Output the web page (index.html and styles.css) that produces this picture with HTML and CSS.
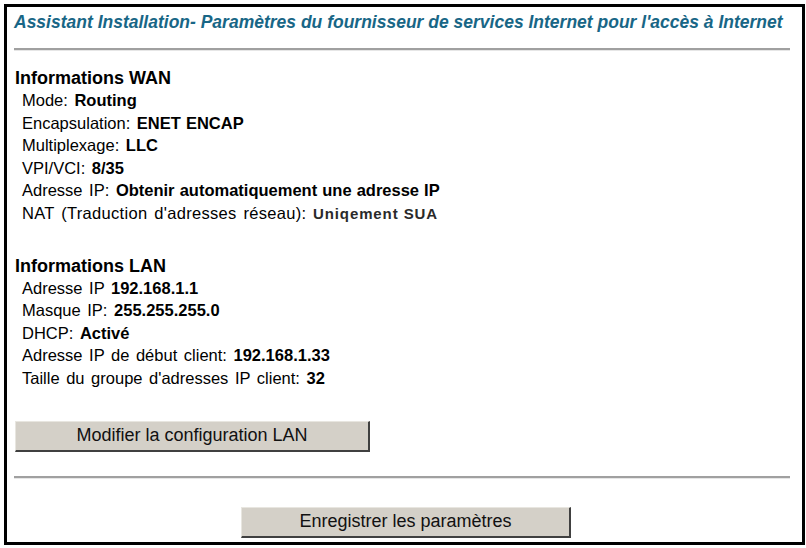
FILE: index.html
```html
<!DOCTYPE html>
<html lang="fr">
<head>
<meta charset="utf-8">
<title>Assistant Installation</title>
<link rel="stylesheet" href="styles.css">
</head>
<body>
<div class="frame">
  <div class="title">Assistant Installation- Paramètres du fournisseur de services Internet pour l'accès à Internet</div>
  <div class="rule rule-top"></div>

  <div class="section section-wan">
    <div class="heading">Informations WAN</div>
    <div class="row">Mode: <b>Routing</b></div>
    <div class="row">Encapsulation: <b>ENET ENCAP</b></div>
    <div class="row">Multiplexage: <b>LLC</b></div>
    <div class="row">VPI/VCI: <b>8/35</b></div>
    <div class="row">Adresse IP: <b>Obtenir automatiquement une adresse IP</b></div>
    <div class="row row-nat"><span class="nat-label">NAT (Traduction d'adresses réseau):</span> <b class="small">Uniqement SUA</b></div>
  </div>

  <div class="section section-lan">
    <div class="heading">Informations LAN</div>
    <div class="row">Adresse IP <b>192.168.1.1</b></div>
    <div class="row">Masque IP: <b>255.255.255.0</b></div>
    <div class="row">DHCP: <b>Activé</b></div>
    <div class="row">Adresse IP de début client: <b>192.168.1.33</b></div>
    <div class="row">Taille du groupe d'adresses IP client: <b>32</b></div>
  </div>

  <div class="btn-row">
    <button class="btn btn-lan" type="button">Modifier la configuration LAN</button>
  </div>
  <div class="rule rule-bottom"></div>
  <div class="btn-row btn-row-center">
    <button class="btn btn-save" type="button">Enregistrer les paramètres</button>
  </div>
</div>
</body>
</html>
```
FILE: styles.css
```css
html, body {
  margin: 0;
  padding: 0;
  background: #ffffff;
}

body {
  font-family: "Liberation Sans", Arial, sans-serif;
  color: #000000;
}

.frame {
  box-sizing: border-box;
  margin: 4px 0 0 4px;
  width: 801px;
  height: 541px;
  border: 3px solid #000000;
  padding: 0 12px 0 7px;
}

.title {
  height: 30px;
  line-height: 30px;
  font-size: 17.5px;
  font-weight: bold;
  font-style: italic;
  color: #186686;
  white-space: nowrap;
}

.rule {
  height: 0;
  border-top: 2px solid #a0a0a0;
  border-bottom: 1px solid #e6e6e6;
}

.rule-top {
  margin-top: 11px;
}

.section {
  padding-left: 1px;
}

.section-wan {
  margin-top: 16px;
}

.section-lan {
  margin-top: 30.5px;
}

.heading {
  height: 22px;
  line-height: 22px;
  font-size: 18px;
  font-weight: bold;
}

.row {
  height: 22.5px;
  line-height: 22.5px;
  font-size: 16.5px;
  padding-left: 7px;
  white-space: nowrap;
  word-spacing: 2px;
}

.row b {
  font-weight: bold;
  word-spacing: 0.5px;
}

.nat-label {
  letter-spacing: 0.3px;
}

.row b.small {
  font-size: 15px;
  letter-spacing: 0.9px;
  word-spacing: 0;
  color: #2a2a2a;
}

.btn-row {
  display: flex;
}

.btn-row-center {
  justify-content: center;
  margin-top: 28px;
}

.btn {
  box-sizing: border-box;
  height: 31px;
  font-family: "Liberation Sans", Arial, sans-serif;
  font-size: 18px;
  color: #111111;
  background: #d4d0c8;
  border: none;
  border-top: 1px solid #e8e6e0;
  border-left: 1px solid #e8e6e0;
  border-right: 2px solid #404040;
  border-bottom: 2px solid #404040;
  padding: 0;
  margin: 0;
}

.btn-lan {
  width: 355px;
  margin-top: 31.5px;
  margin-left: 1px;
}

.btn-save {
  width: 330px;
  margin-left: 8px;
}

.rule-bottom {
  margin-top: 24px;
}
```
